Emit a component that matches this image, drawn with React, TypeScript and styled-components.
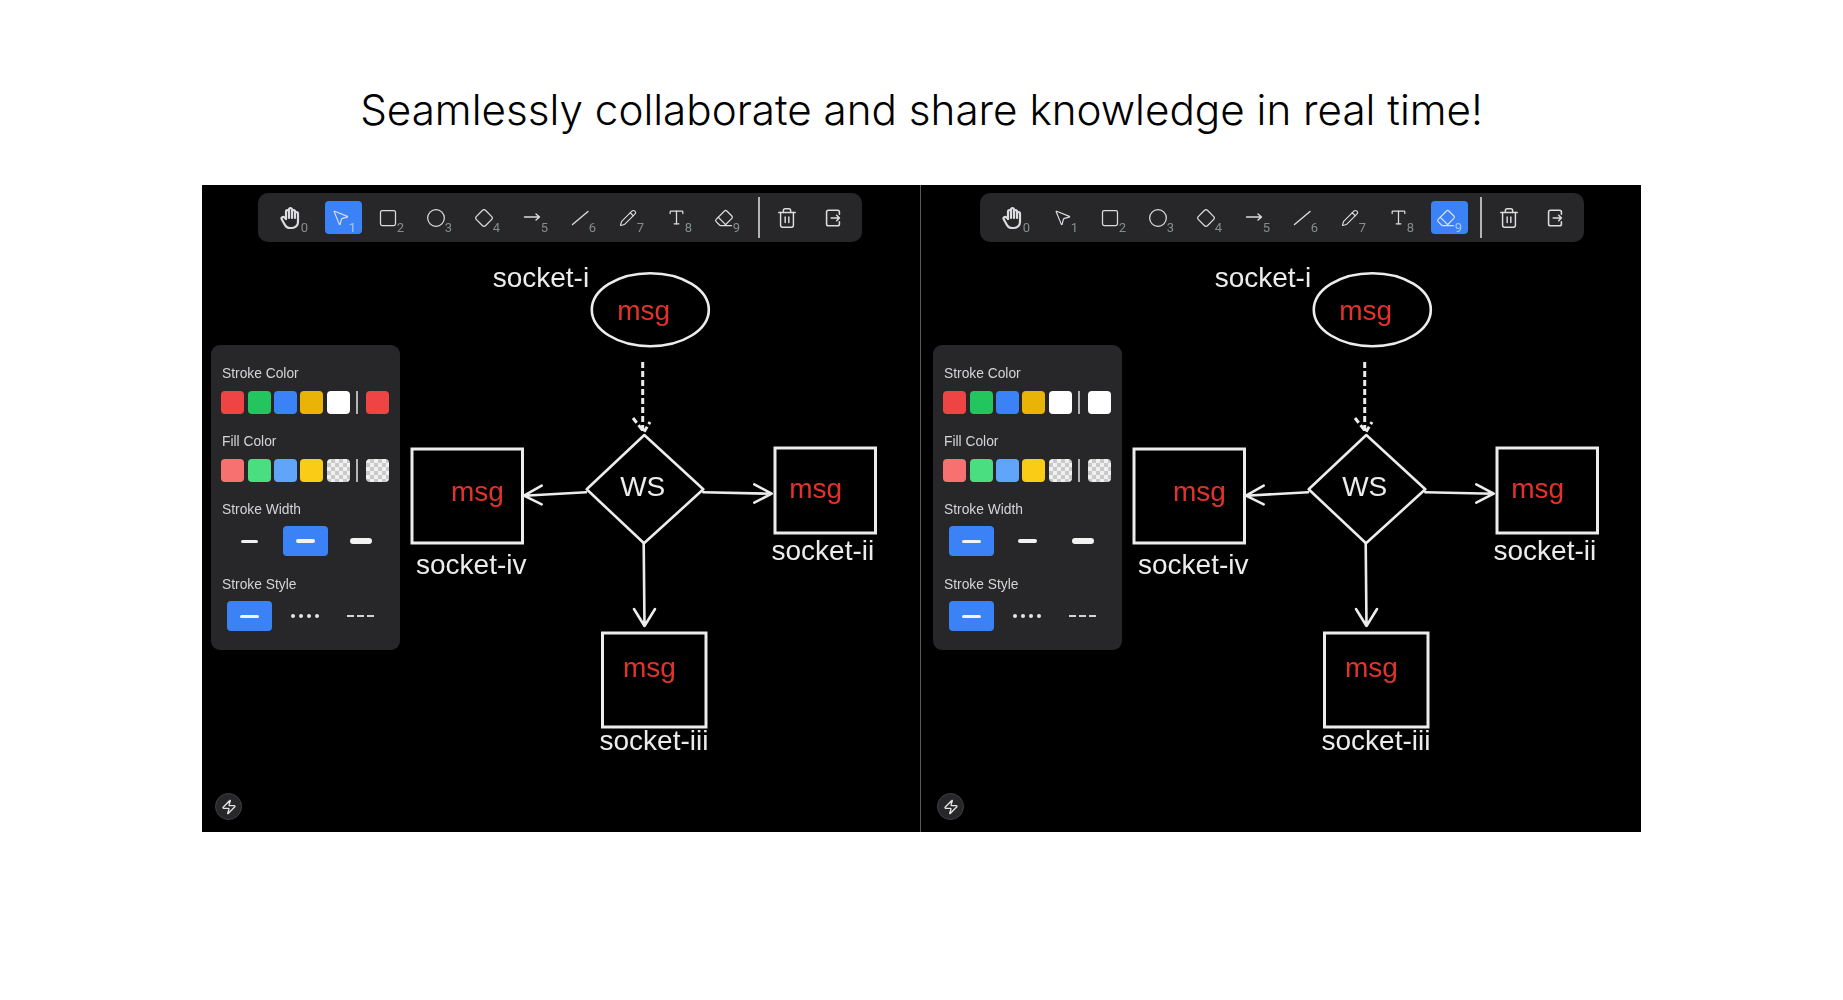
import { ReactNode } from 'react';
import styled, { createGlobalStyle } from 'styled-components';
import { Circle, Diamond, Eraser, MousePointer2, Pencil, Square, Trash2, Type, Zap } from 'lucide-react';
import { TbHandStop } from 'react-icons/tb';

const GlobalStyle = createGlobalStyle`
  html, body {
    margin: 0;
    background: #fff;
  }
`;

const Page = styled.main`
  height: 1000px;
  display: flex;
  flex-direction: column;
  align-items: center;
  overflow: hidden;
  background: #fff;
`;

const Title = styled.h1`
  margin: 84px 0 0;
  height: 51px;
  font-family: Inter, "Liberation Sans", sans-serif;
  font-size: 42.2px;
  line-height: 51px;
  font-weight: 350;
  color: #000;
  white-space: nowrap;
`;

const Shot = styled.section`
  margin-top: 50px;
  width: 1439px;
  height: 647px;
  display: flex;
  overflow: hidden;
  background: #000;
  filter: blur(0.5px);
`;

const Canvas = styled.div<{ $seam?: boolean }>`
  position: relative;
  flex: 0 0 722px;
  height: 647px;
  font-family: "Liberation Sans", Arial, sans-serif;

  &::after {
    content: '';
    display: ${props => (props.$seam ? 'block' : 'none')};
    position: absolute;
    top: 0;
    bottom: 0;
    right: 3px;
    width: 1px;
    background: #5a5a5a;
  }
`;

const Diagram = styled.svg`
  display: block;
  width: 722px;
  height: 647px;
`;

const NodeLabel = styled.text`
  font-family: "Liberation Sans", Arial, sans-serif;
  font-size: 28px;
  fill: #ececec;
`;

const Message = styled(NodeLabel)`
  fill: #e2332b;
`;

const Toolbar = styled.div`
  position: absolute;
  left: 56px;
  top: 8px;
  width: 604px;
  height: 49px;
  box-sizing: border-box;
  padding: 0 10px 0 19px;
  display: flex;
  align-items: center;
  border-radius: 10px;
  background: #27272a;
`;

const ToolGroup = styled.div`
  display: flex;
  gap: 11px;
`;

const ToolButton = styled.div<{ $active?: boolean }>`
  position: relative;
  width: 37px;
  height: 33px;
  padding-right: 7px;
  box-sizing: border-box;
  display: flex;
  align-items: center;
  justify-content: center;
  border-radius: 4px;
  color: #dcdce0;
  background: ${props => (props.$active ? '#3b82f6' : 'transparent')};
`;

const HandIcon = styled(TbHandStop)`
  margin-left: -5px;
`;

const ToolKey = styled.span<{ $active?: boolean }>`
  position: absolute;
  right: 6px;
  bottom: 0;
  font-family: Roboto, "Liberation Sans", sans-serif;
  font-size: 13px;
  line-height: 13px;
  color: ${props => (props.$active ? '#a9c9fa' : '#858d8f')};
`;

const ToolDivider = styled.div`
  flex: 0 0 2px;
  height: 41px;
  margin: 0 8.5px 0 12px;
  background: #b4b4b4;
`;

const ActionGroup = styled.div`
  display: flex;
  gap: 9px;
`;

const ActionButton = styled.div`
  width: 37px;
  height: 33px;
  display: flex;
  align-items: center;
  justify-content: center;
  color: #dcdce0;
`;

const Props = styled.aside`
  position: absolute;
  left: 9px;
  top: 160px;
  width: 189px;
  height: 305px;
  box-sizing: border-box;
  padding: 21px 11px 0;
  display: flex;
  flex-direction: column;
  gap: 20px;
  border-radius: 9px;
  background: #27272a;
`;

const PropGroup = styled.div`
  display: flex;
  flex-direction: column;
  gap: 9px;
`;

const PropLabel = styled.div`
  height: 16px;
  font-size: 13.8px;
  line-height: 16px;
  color: #d4d4d8;
`;

const SwatchRow = styled.div`
  display: flex;
  align-items: center;
  gap: 3.4px;
  margin-left: -0.8px;
`;

const Swatch = styled.div<{ $color: string }>`
  width: 23px;
  height: 23px;
  border-radius: 4px;
  background: ${props =>
    props.$color === 'none'
      ? 'repeating-conic-gradient(#c9c9c9 0 25%, #f0f0f0 0 50%) 0 0 / 8px 8px'
      : props.$color};
`;

const SwatchDivider = styled.div`
  width: 2px;
  height: 23px;
  margin: 0 4px 0 3px;
  background: #b4b4b4;
`;

const OptionRow = styled.div`
  display: flex;
  gap: 10.5px;
  margin: -1px 0 1px;
  padding-left: 5px;
`;

const OptionButton = styled.div<{ $active?: boolean; $gap?: number }>`
  width: 45px;
  height: 30px;
  display: flex;
  align-items: center;
  justify-content: center;
  gap: ${props => props.$gap ?? 0}px;
  border-radius: 4px;
  background: ${props => (props.$active ? '#3b82f6' : 'transparent')};
`;

const Stroke = styled.span<{ $width: number; $height: number }>`
  width: ${props => props.$width}px;
  height: ${props => props.$height}px;
  border-radius: 3px;
  background: #f2f2f2;
`;

const Dot = styled.span`
  width: 4px;
  height: 4px;
  border-radius: 50%;
  background: #e4e4e7;
`;

const Dash = styled.span`
  width: 7px;
  height: 2.5px;
  background: #d4d4d8;
`;

const Bolt = styled.div`
  position: absolute;
  left: 13px;
  bottom: 12px;
  width: 27px;
  height: 27px;
  box-sizing: border-box;
  display: flex;
  align-items: center;
  justify-content: center;
  border: 1px solid #3f3f46;
  border-radius: 50%;
  color: #e4e4e7;
  background: #27272a;
`;

const strokeColors = ['#ef4444', '#22c55e', '#3b82f6', '#eab308', '#ffffff'];
const fillColors = ['#f87171', '#4ade80', '#60a5fa', '#facc15', 'none'];

function ArrowGlyph() {
  return (
    <svg width="20" height="20" viewBox="0 0 20 20" fill="none" stroke="currentColor" strokeWidth="1.4" strokeLinecap="round" strokeLinejoin="round">
      <path d="M2.5 9h15M14 6l3.5 3-3.5 3" />
    </svg>
  );
}

function LineGlyph() {
  return (
    <svg width="20" height="20" viewBox="0 0 20 20" fill="none" stroke="currentColor" strokeWidth="1.4" strokeLinecap="round">
      <path d="M2.5 16.5 18 3.5" />
    </svg>
  );
}

function ExitGlyph() {
  return (
    <svg width="22" height="22" viewBox="0 0 24 24" fill="none" stroke="currentColor" strokeWidth="1.7" strokeLinecap="round" strokeLinejoin="round">
      <path d="M19 8V5.5a2 2 0 0 0-2-2H7a2 2 0 0 0-2 2v13a2 2 0 0 0 2 2h10a2 2 0 0 0 2-2V16" />
      <path d="M10 12h9M16 9l3 3-3 3" />
    </svg>
  );
}

const tools: ReactNode[] = [
  <HandIcon size={24} strokeWidth={2.2} />,
  <MousePointer2 size={19} strokeWidth={1.5} />,
  <Square size={20} strokeWidth={1.5} />,
  <Circle size={20} strokeWidth={1.5} />,
  <Diamond size={20} strokeWidth={1.5} />,
  <ArrowGlyph />,
  <LineGlyph />,
  <Pencil size={18} strokeWidth={1.5} />,
  <Type size={19} strokeWidth={1.6} />,
  <Eraser size={20} strokeWidth={1.5} />,
];

function Flowchart() {
  return (
    <Diagram viewBox="202 185 722 647" fill="none" stroke="#ececec" strokeWidth="2.6" strokeLinecap="round" strokeLinejoin="round">
      <ellipse cx="650.3" cy="309.7" rx="58.5" ry="36.5" />
      <path d="M642.7 362V432M633 418l11 14 6-10" strokeWidth="3" strokeDasharray="6 3" strokeLinecap="butt" />
      <path d="M644.3 435 703.3 489.3 644 543.3 586.7 489.3Z" />
      <rect x="412" y="449" width="110.5" height="94" strokeWidth="3" strokeLinejoin="miter" />
      <rect x="775" y="448" width="100.5" height="85" strokeWidth="3" strokeLinejoin="miter" />
      <rect x="602.5" y="633" width="103.5" height="94" strokeWidth="3" strokeLinejoin="miter" />
      <path d="M586 492.3 524 495.7M541.7 485.7 524 495.7 541.7 504.3" />
      <path d="M703.3 492.3 771.7 493.7M754.3 484.3 771.7 493.7 754.3 502.7" />
      <path d="M643.7 543.3 644.5 626M634 609 644.5 626 655 609" />
      <NodeLabel x="492.7" y="287" stroke="none">socket-i</NodeLabel>
      <NodeLabel x="416" y="574.3" stroke="none">socket-iv</NodeLabel>
      <NodeLabel x="771.5" y="560.3" stroke="none">socket-ii</NodeLabel>
      <NodeLabel x="599.5" y="750" stroke="none">socket-iii</NodeLabel>
      <NodeLabel x="620.2" y="495.7" stroke="none">WS</NodeLabel>
      <Message x="617.2" y="319.5" stroke="none">msg</Message>
      <Message x="451" y="501.2" stroke="none">msg</Message>
      <Message x="789.3" y="498.2" stroke="none">msg</Message>
      <Message x="623" y="677" stroke="none">msg</Message>
    </Diagram>
  );
}

type BoardProps = {
  activeTool: number;
  strokeColor: string;
  strokeWidth: number;
  seam?: boolean;
};

function Board({ activeTool, strokeColor, strokeWidth, seam }: BoardProps) {
  return (
    <Canvas $seam={seam}>
      <Flowchart />

      <Toolbar>
        <ToolGroup>
          {tools.map((icon, index) => (
            <ToolButton key={index} $active={index === activeTool}>
              {icon}
              <ToolKey $active={index === activeTool}>{index}</ToolKey>
            </ToolButton>
          ))}
        </ToolGroup>
        <ToolDivider />
        <ActionGroup>
          <ActionButton><Trash2 size={22} strokeWidth={1.6} /></ActionButton>
          <ActionButton><ExitGlyph /></ActionButton>
        </ActionGroup>
      </Toolbar>

      <Props>
        <PropGroup>
          <PropLabel>Stroke Color</PropLabel>
          <SwatchRow>
            {strokeColors.map(color => <Swatch key={color} $color={color} />)}
            <SwatchDivider />
            <Swatch $color={strokeColor} />
          </SwatchRow>
        </PropGroup>
        <PropGroup>
          <PropLabel>Fill Color</PropLabel>
          <SwatchRow>
            {fillColors.map(color => <Swatch key={color} $color={color} />)}
            <SwatchDivider />
            <Swatch $color="none" />
          </SwatchRow>
        </PropGroup>
        <PropGroup>
          <PropLabel>Stroke Width</PropLabel>
          <OptionRow>
            <OptionButton $active={strokeWidth === 0}><Stroke $width={strokeWidth === 0 ? 19 : 17} $height={3} /></OptionButton>
            <OptionButton $active={strokeWidth === 1}><Stroke $width={19} $height={4} /></OptionButton>
            <OptionButton $active={strokeWidth === 2}><Stroke $width={22} $height={6} /></OptionButton>
          </OptionRow>
        </PropGroup>
        <PropGroup>
          <PropLabel>Stroke Style</PropLabel>
          <OptionRow>
            <OptionButton $active><Stroke $width={19} $height={3} /></OptionButton>
            <OptionButton $gap={4}><Dot /><Dot /><Dot /><Dot /></OptionButton>
            <OptionButton $gap={3}><Dash /><Dash /><Dash /></OptionButton>
          </OptionRow>
        </PropGroup>
      </Props>

      <Bolt><Zap size={16} strokeWidth={2} /></Bolt>
    </Canvas>
  );
}

export default function App() {
  return (
    <Page>
      <GlobalStyle />
      <Title>Seamlessly collaborate and share knowledge in real time!</Title>
      <Shot>
        <Board activeTool={1} strokeColor="#ef4444" strokeWidth={1} seam />
        <Board activeTool={9} strokeColor="#ffffff" strokeWidth={0} />
      </Shot>
    </Page>
  );
}
